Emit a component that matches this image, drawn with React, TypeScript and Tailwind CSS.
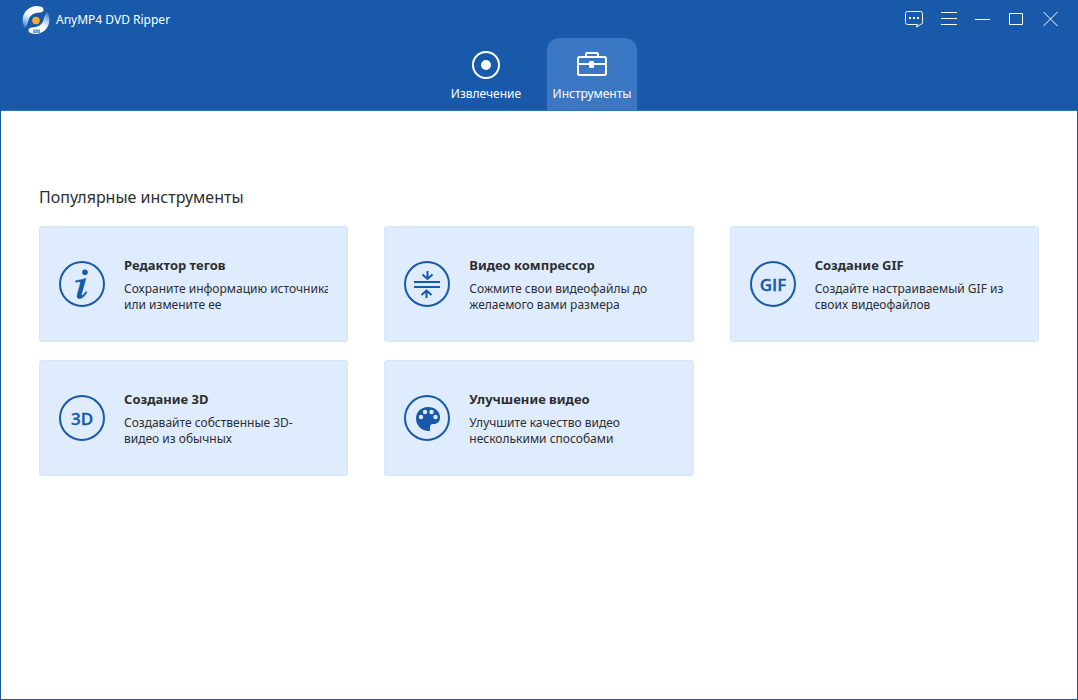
import React, { useState } from 'react';

interface Tool {
  title: string;
  description: string;
  icon: React.ReactNode;
}

// Round outline shared by all tool icons
const RoundIcon = ({ children }: { children: React.ReactNode }) => (
  <svg width="46" height="46" viewBox="0 0 46 46" fill="none" className="shrink-0" aria-hidden="true">
    <circle cx="23" cy="23" r="22" stroke="#1859a9" strokeWidth="2" />
    {children}
  </svg>
);

const InfoIcon = () => (
  <RoundIcon>
    <circle cx="26" cy="11.300" r="2.800" fill="#1859a9" />
    <path
      d="M16.700 19.700c3.600-.4 6.800-1.200 10.300-2.500l-4.300 15.300c-.5 1.900.1 2.300 1.300 1.400.9-.7 1.900-1.900 2.900-3.300l1 .7c-2.200 3.900-4.400 6.300-7.200 6.300-2.400 0-3.100-1.700-2.400-4.200l2.900-10.400c.4-1.600.1-2.200-1.400-2.200-.9 0-1.900.2-3.100.4z"
      fill="#1859a9"
      stroke="#1859a9"
      strokeWidth="0.500"
    />
  </RoundIcon>
);

const CompressIcon = () => (
  <RoundIcon>
    <path d="M10 21h26M10 26h26M23.500 10v8M18.500 13.500l5 4.500 5-4.500M22.500 37v-7.500M17.500 34l5-4.500 5 4.500" stroke="#1859a9" strokeWidth="2" />
  </RoundIcon>
);

const LabelIcon = ({ label }: { label: string }) => (
  <RoundIcon>
    <text
      x="23"
      y="30"
      textAnchor="middle"
      fill="#1859a9"
      stroke="#1859a9"
      strokeWidth="0.300"
      className="font-['Open_Sans',sans-serif] text-[17px] font-semibold"
    >
      {label}
    </text>
  </RoundIcon>
);

const PaletteIcon = () => (
  <RoundIcon>
    <path
      d="M24 12c-7 0-12 5-12 11.500C12 30 17 36 25 36h1v-3.500c0-2.500 1-3.500 3.500-3.500h1c3.500-.5 5.500-3 5.500-6.500C36 16.500 31 12 24 12z"
      fill="#1859a9"
    />
    <circle cx="17" cy="22" r="2.200" fill="#dfecfe" />
    <circle cx="21" cy="17" r="2.200" fill="#dfecfe" />
    <circle cx="27.500" cy="17" r="2.200" fill="#dfecfe" />
    <circle cx="31.500" cy="22" r="2.200" fill="#dfecfe" />
  </RoundIcon>
);

const Logo = () => (
  <svg width="28" height="28" viewBox="0 0 28 28" fill="none" aria-hidden="true">
    <defs>
      <linearGradient id="swoosh" x1="12" y1="6" x2="4" y2="22" gradientUnits="userSpaceOnUse">
        <stop offset="0.200" stopColor="#ffffff" />
        <stop offset="0.600" stopColor="#a9c9ef" />
        <stop offset="1" stopColor="#3f7dcb" />
      </linearGradient>
    </defs>
    <path d="M3 22A14 14 0 0 1 18 .5c2 .2 3.500 1.500 3.500 3.200s-1.500 2.800-3.500 2.800C12 6.500 7.500 9.500 6.500 14c-.7 3-1.500 6-3.500 8z" fill="url(#swoosh)" />
    <path
      d="M3 22A14 14 0 0 1 18 .5c2 .2 3.500 1.500 3.500 3.200s-1.500 2.800-3.500 2.800C12 6.500 7.500 9.500 6.500 14c-.7 3-1.500 6-3.500 8z"
      fill="url(#swoosh)"
      transform="rotate(180 14 14)"
    />
    <circle cx="14" cy="14.500" r="3.800" fill="#fdaa2d" />
    <path d="M11 23.500h7v3.500h-7z" fill="#5a9cec" />
    <path d="M12.500 25h1M15.500 26h1" stroke="#ffffff" />
  </svg>
);

const DiscIcon = () => (
  <svg width="28" height="28" viewBox="0 0 28 28" fill="none" aria-hidden="true">
    <circle cx="14" cy="14" r="13" stroke="#ffffff" strokeWidth="2" />
    <circle cx="14" cy="14" r="5" fill="#ffffff" />
  </svg>
);

const ToolboxIcon = () => (
  <svg width="30" height="28" viewBox="0 0 30 28" fill="none" aria-hidden="true">
    <rect x="1" y="6" width="28" height="18" rx="1.500" stroke="#ffffff" strokeWidth="2" />
    <path d="M9 6V3q0-1 1-1h10q1 0 1 1v3M1 13h28" stroke="#ffffff" strokeWidth="2" />
    <rect x="12" y="10" width="5" height="7" rx="1" fill="#ffffff" />
  </svg>
);

const windowButtons = [
  {
    label: 'Feedback',
    icon: (
      <>
        <path d="M2.500 2.500h13q2 0 2 2v9q0 2-2 2l-4 2.500 1-2.500h-10q-2 0-2-2v-9q0-2 2-2z" />
        <path d="M4 9h2M8 9h2M12 9h2" strokeWidth="2" />
      </>
    ),
  },
  { label: 'Menu', icon: <path d="M2 3.500h16M2 9.500h16M2 15.500h16" /> },
  { label: 'Minimize', icon: <path d="M2 10.500h15" /> },
  { label: 'Maximize', icon: <path d="M2.500 4.500h13v11h-13z" /> },
  { label: 'Close', icon: <path d="M2.500 3l14 14M16.500 3l-14 14" /> },
];

const tabs = [
  { label: 'Извлечение', icon: <DiscIcon /> },
  { label: 'Инструменты', icon: <ToolboxIcon /> },
];

const tools: Tool[] = [
  { title: 'Редактор тегов', description: 'Сохраните информацию источника\nили измените ее', icon: <InfoIcon /> },
  { title: 'Видео компрессор', description: 'Сожмите свои видеофайлы до\nжелаемого вами размера', icon: <CompressIcon /> },
  { title: 'Создание GIF', description: 'Создайте настраиваемый GIF из\nсвоих видеофайлов', icon: <LabelIcon label="GIF" /> },
  { title: 'Создание 3D', description: 'Создавайте собственные 3D-\nвидео из обычных', icon: <LabelIcon label="3D" /> },
  { title: 'Улучшение видео', description: 'Улучшите качество видео\nнесколькими способами', icon: <PaletteIcon /> },
];

const ToolCard = ({ tool }: { tool: Tool }) => (
  <button className="flex items-center gap-[19px] rounded-[3px] border border-[#d2e7fb] bg-[#dfecfe] px-[19px] h-[116px] text-left text-[#2e2e2e]">
    {tool.icon}
    <span className="flex min-w-0 flex-1 flex-col gap-2 overflow-hidden pt-px leading-4">
      <span className="text-[13px] font-bold">{tool.title}</span>
      <span className="whitespace-pre text-[12px]">{tool.description}</span>
    </span>
  </button>
);

export default function App() {
  const [activeTab, setActiveTab] = useState('Инструменты');

  return (
    <div className="flex min-h-screen flex-col border border-t-0 border-[#1859a9] bg-white font-[Tahoma,'Noto_Sans',sans-serif]">
      <header className="bg-[#1859a9] text-white">
        {/* Title bar */}
        <div className="flex h-[38px] items-center justify-between pl-[21px] pr-[9px]">
          <div className="flex items-center gap-[6px] pt-[2px]">
            <Logo />
            <h1 className="text-[12px] leading-4">AnyMP4 DVD Ripper</h1>
          </div>
          <div className="flex">
            {windowButtons.map((button) => (
              <button key={button.label} aria-label={button.label} className="flex h-[38px] w-[34px] items-center justify-center">
                <svg width="20" height="20" viewBox="0 0 20 20" fill="none" stroke="#ffffff">
                  {button.icon}
                </svg>
              </button>
            ))}
          </div>
        </div>

        {/* Tabs */}
        <nav className="flex justify-center gap-4 border-b border-[#2f6fbd]">
          {tabs.map((tab) => (
            <button
              key={tab.label}
              onClick={() => setActiveTab(tab.label)}
              className={`flex h-[72px] w-[90px] flex-col items-center gap-[7px] rounded-t-xl pt-[13px] text-[12px] leading-4 ${
                activeTab === tab.label ? 'bg-[#3b77c2]' : ''
              }`}
            >
              {tab.icon}
              <span>{tab.label}</span>
            </button>
          ))}
        </nav>
      </header>

      <main className="flex-1 px-[38px] pb-10 pt-[74px]">
        <h2 className="text-[16px] leading-6 text-[#2e2e2e]">Популярные инструменты</h2>
        <div className="mt-[17px] grid grid-cols-3 gap-x-9 gap-y-[18px]">
          {tools.map((tool) => (
            <ToolCard key={tool.title} tool={tool} />
          ))}
        </div>
      </main>
    </div>
  );
}
